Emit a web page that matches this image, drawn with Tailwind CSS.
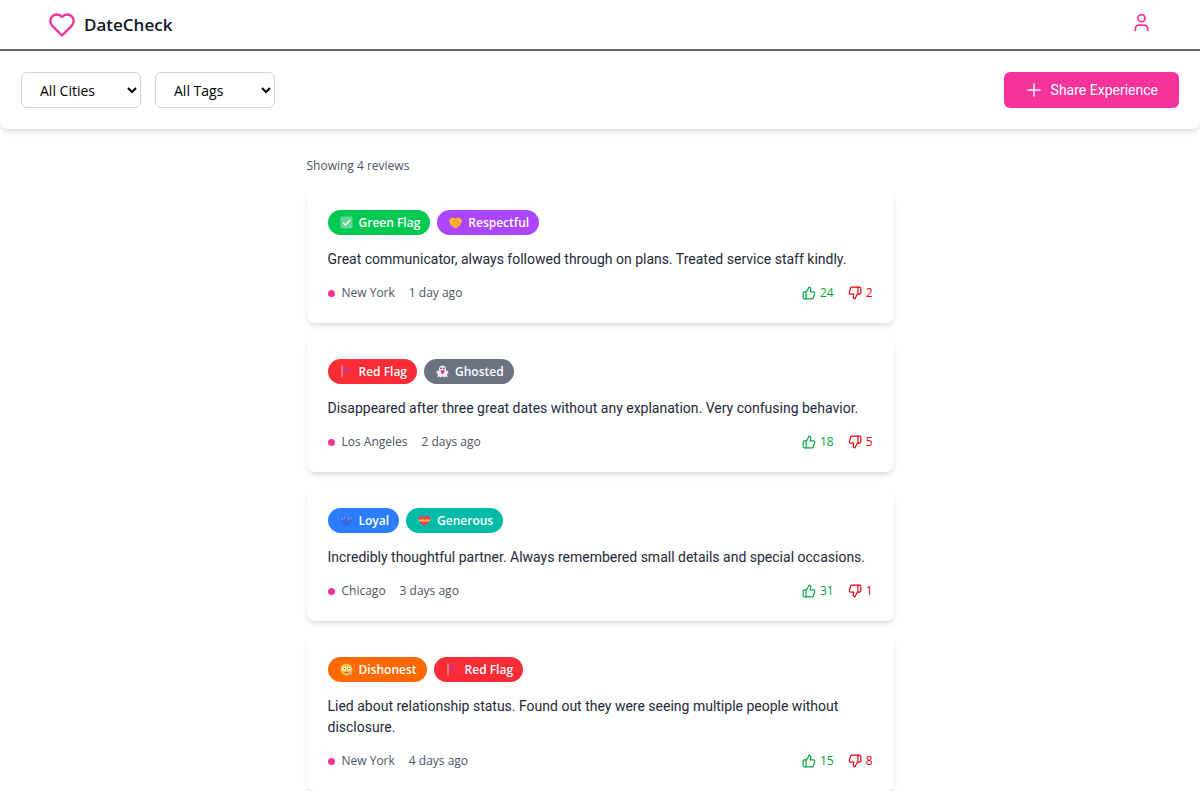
<!DOCTYPE html>
<html lang="en">

<head>
  <meta charset="UTF-8">
  <meta name="viewport" content="width=device-width, initial-scale=1.0">
  <title>DateCheck</title>
  <script src="https://cdn.jsdelivr.net/npm/@tailwindcss/browser@4"></script>
</head>

<body class="bg-white font-['Open_Sans',sans-serif] text-gray-900">
  <!-- shared icons -->
  <svg class="hidden">
    <symbol id="thumbs-up" viewBox="0 0 24 24" fill="none" stroke="currentColor" stroke-width="2" stroke-linecap="round" stroke-linejoin="round">
      <path d="M7 10v12" />
      <path d="M15 5.88 14 10h5.83a2 2 0 0 1 1.92 2.56l-2.33 8A2 2 0 0 1 17.5 22H4a2 2 0 0 1-2-2v-8a2 2 0 0 1 2-2h2.76a2 2 0 0 0 1.79-1.11L12 2a3.13 3.13 0 0 1 3 3.88Z" />
    </symbol>
    <symbol id="thumbs-down" viewBox="0 0 24 24" fill="none" stroke="currentColor" stroke-width="2" stroke-linecap="round" stroke-linejoin="round">
      <path d="M17 14V2" />
      <path d="M9 18.12 10 14H4.17a2 2 0 0 1-1.92-2.56l2.33-8A2 2 0 0 1 6.5 2H20a2 2 0 0 1 2 2v8a2 2 0 0 1-2 2h-2.76a2 2 0 0 0-1.79 1.11L12 22a3.13 3.13 0 0 1-3-3.88Z" />
    </symbol>
    <symbol id="check" viewBox="0 0 13 13">
      <rect x="0.5" y="0.5" width="12" height="12" rx="1" fill="#5fd891" />
      <path d="M3 6.8 5.4 9.2 10 4" fill="none" stroke="#fff" stroke-width="1.4" />
    </symbol>
    <symbol id="handshake" viewBox="0 0 13 13">
      <path d="M0.2 4.5 2.5 1.5 6.5 2.3 10.5 1.5 12.8 4.5 12 8.3 7.5 12 5.5 12 1 8.3Z" fill="#fbb72f" />
      <path d="M4 5.5 6.5 4 9 6 11 8M3.5 8 6 10.5M6 7.5 8.3 9.8" fill="none" stroke="#d9822b" stroke-width="0.8" />
    </symbol>
    <symbol id="flag" viewBox="0 0 13 13">
      <path d="M2.6 1 12.5 4.8 2.6 8.6Z" fill="#d63384" />
      <path d="M2 0.5v12" stroke="#e8a878" stroke-width="1.2" />
    </symbol>
    <symbol id="ghost" viewBox="0 0 13 13">
      <path d="M3 6V4a3.5 3.5 0 0 1 7 0v2l2-.5.3 3L11 9l.8 3.2-2-.7-1.500 1-1.800-1-1.800 1-1.500-1-2 .7L2 9 .5 8.500l.4-3Z" fill="#eceaf4" />
      <circle cx="5" cy="3.4" r="0.8" fill="#4b3b5c" />
      <circle cx="8" cy="3.4" r="0.8" fill="#4b3b5c" />
      <path d="M4.6 5.3h4L7.8 8.3 6.5 9 5.2 8Z" fill="#ef2e71" />
    </symbol>
    <symbol id="blue-heart" viewBox="0 0 13 13">
      <path d="M6.5 12C2.500 9.500.5 7.500.5 4.800.5 1.200 5 .8 6.500 3.400 8 .8 12.500 1.200 12.500 4.800c0 2.700-2 4.700-6 7.200Z" fill="#3a66e4" />
      <path d="M2.500 3v3M4.800 2.500v2.500M8.500 2.500v4M11 3v2.500" stroke="#6ba0f8" stroke-width="1.300" />
    </symbol>
    <symbol id="gift-heart" viewBox="0 0 13 13">
      <path d="M6.500 12C2.500 9.300.5 7.300.5 4.800.5 1.300 5 .8 6.500 3.500 8 .8 12.500 1.300 12.500 4.800c0 2.500-2 4.500-6 7.200Z" fill="#f23b5e" />
      <path d="M.6 5.200 6.500 6.300 12.400 5.200 11.800 7.200 6.500 8 1.200 7.200Z" fill="#fcc02e" />
      <path d="M3.800 4.500 6.500 5.500 9.200 4.500V6.500H3.800Z" fill="#f79a2c" />
    </symbol>
    <symbol id="worried" viewBox="0 0 13 13">
      <circle cx="6.500" cy="6.500" r="6" fill="#fcc13a" />
      <circle cx="4" cy="5.500" r="1.900" fill="#fff" />
      <circle cx="9" cy="5.500" r="1.900" fill="#fff" />
      <circle cx="4.200" cy="5.500" r="0.800" fill="#553c3c" />
      <circle cx="8.800" cy="5.500" r="0.800" fill="#553c3c" />
      <path d="M4.300 10Q6.500 8.400 8.700 10" fill="none" stroke="#7a4a2c" stroke-width="1" />
      <path d="M10.500 8.500 12.500 11.500 9 12Z" fill="#b9a7c9" />
    </symbol>
  </svg>

  <header class="flex items-center justify-between h-[51px] px-12 border-b-2 border-[#636363]">
    <a href="#" class="flex items-center gap-2">
      <svg class="size-7 text-[#f6339a]" viewBox="0 0 24 24" fill="none" stroke="currentColor" stroke-width="2" stroke-linecap="round" stroke-linejoin="round">
        <path d="M19 14c1.490-1.460 3-3.210 3-5.500A5.500 5.500 0 0 0 16.500 3c-1.760 0-3 .5-4.500 2-1.500-1.500-2.740-2-4.500-2A5.500 5.500 0 0 0 2 8.500c0 2.300 1.500 4.050 3 5.500l7 7Z" />
      </svg>
      <span class="text-[17px] leading-6 font-semibold">DateCheck</span>
    </a>
    <button type="button" aria-label="Profile" class="pb-1">
      <svg class="size-[21px] text-[#f6339a]" viewBox="0 0 24 24" fill="none" stroke="currentColor" stroke-width="2" stroke-linecap="round" stroke-linejoin="round">
        <path d="M19 21v-2a4 4 0 0 0-4-4H9a4 4 0 0 0-4 4v2" />
        <circle cx="12" cy="7" r="4" />
      </svg>
    </button>
  </header>

  <section class="flex items-center justify-between p-[21px] rounded-lg shadow-md">
    <div class="flex gap-[14px]">
      <select aria-label="City" class="w-[120px] h-9 px-[14px] border border-gray-300 rounded-md text-sm text-black">
        <option>All Cities</option>
        <option>New York</option>
        <option>Los Angeles</option>
        <option>Chicago</option>
      </select>
      <select aria-label="Tag" class="w-[120px] h-9 px-[14px] border border-gray-300 rounded-md text-sm text-black">
        <option>All Tags</option>
        <option>Green Flag</option>
        <option>Red Flag</option>
      </select>
    </div>
    <button type="button" class="flex items-center gap-2 h-9 px-[21px] rounded-md bg-[#f6339a] font-[Roboto,sans-serif] text-sm text-white">
      <svg class="size-[18px]" viewBox="0 0 24 24" fill="none" stroke="currentColor" stroke-width="2" stroke-linecap="round">
        <path d="M4 12h16M12 4v16" />
      </svg>
      Share Experience
    </button>
  </section>

  <main class="max-w-[587px] mx-auto pt-7">
    <p class="text-xs leading-[18px] text-gray-600 mb-[14px]">Showing 4 reviews</p>

    <div class="flex flex-col gap-[15px]">
      <article class="p-[21px] rounded-lg shadow-md">
        <div class="flex gap-[7px] mb-[14px]">
          <span class="flex items-center gap-[6px] h-[25px] pl-3 pr-[10px] rounded-full bg-green-500 text-xs font-semibold text-white">
            <svg class="size-[13px]"><use href="#check" /></svg>Green Flag
          </span>
          <span class="flex items-center gap-[6px] h-[25px] pl-3 pr-[10px] rounded-full bg-purple-500 text-xs font-semibold text-white">
            <svg class="size-[13px]"><use href="#handshake" /></svg>Respectful
          </span>
        </div>
        <p class="font-[Roboto,sans-serif] text-sm leading-[21px] text-gray-800 mb-[14px]">Great communicator, always followed through on plans. Treated service staff kindly.</p>
        <div class="flex justify-between text-xs leading-[18px] text-gray-600">
          <div class="flex items-center gap-[14px]">
            <span class="flex items-center gap-[7px]"><span class="size-[7px] rounded-full bg-[#f6339a]"></span>New York</span>
            <span>1 day ago</span>
          </div>
          <div class="flex gap-[14px]">
            <button type="button" class="flex items-center gap-1 text-green-600"><svg class="size-[14px]"><use href="#thumbs-up" /></svg>24</button>
            <button type="button" class="flex items-center gap-1 text-red-600"><svg class="size-[14px]"><use href="#thumbs-down" /></svg>2</button>
          </div>
        </div>
      </article>

      <article class="p-[21px] rounded-lg shadow-md">
        <div class="flex gap-[7px] mb-[14px]">
          <span class="flex items-center gap-[6px] h-[25px] pl-3 pr-[10px] rounded-full bg-red-500 text-xs font-semibold text-white">
            <svg class="size-[13px]"><use href="#flag" /></svg>Red Flag
          </span>
          <span class="flex items-center gap-[6px] h-[25px] pl-3 pr-[10px] rounded-full bg-gray-500 text-xs font-semibold text-white">
            <svg class="size-[13px]"><use href="#ghost" /></svg>Ghosted
          </span>
        </div>
        <p class="font-[Roboto,sans-serif] text-sm leading-[21px] text-gray-800 mb-[14px]">Disappeared after three great dates without any explanation. Very confusing behavior.</p>
        <div class="flex justify-between text-xs leading-[18px] text-gray-600">
          <div class="flex items-center gap-[14px]">
            <span class="flex items-center gap-[7px]"><span class="size-[7px] rounded-full bg-[#f6339a]"></span>Los Angeles</span>
            <span>2 days ago</span>
          </div>
          <div class="flex gap-[14px]">
            <button type="button" class="flex items-center gap-1 text-green-600"><svg class="size-[14px]"><use href="#thumbs-up" /></svg>18</button>
            <button type="button" class="flex items-center gap-1 text-red-600"><svg class="size-[14px]"><use href="#thumbs-down" /></svg>5</button>
          </div>
        </div>
      </article>

      <article class="p-[21px] rounded-lg shadow-md">
        <div class="flex gap-[7px] mb-[14px]">
          <span class="flex items-center gap-[6px] h-[25px] pl-3 pr-[10px] rounded-full bg-blue-500 text-xs font-semibold text-white">
            <svg class="size-[13px]"><use href="#blue-heart" /></svg>Loyal
          </span>
          <span class="flex items-center gap-[6px] h-[25px] pl-3 pr-[10px] rounded-full bg-teal-500 text-xs font-semibold text-white">
            <svg class="size-[13px]"><use href="#gift-heart" /></svg>Generous
          </span>
        </div>
        <p class="font-[Roboto,sans-serif] text-sm leading-[21px] text-gray-800 mb-[14px]">Incredibly thoughtful partner. Always remembered small details and special occasions.</p>
        <div class="flex justify-between text-xs leading-[18px] text-gray-600">
          <div class="flex items-center gap-[14px]">
            <span class="flex items-center gap-[7px]"><span class="size-[7px] rounded-full bg-[#f6339a]"></span>Chicago</span>
            <span>3 days ago</span>
          </div>
          <div class="flex gap-[14px]">
            <button type="button" class="flex items-center gap-1 text-green-600"><svg class="size-[14px]"><use href="#thumbs-up" /></svg>31</button>
            <button type="button" class="flex items-center gap-1 text-red-600"><svg class="size-[14px]"><use href="#thumbs-down" /></svg>1</button>
          </div>
        </div>
      </article>

      <article class="p-[21px] rounded-lg shadow-md">
        <div class="flex gap-[7px] mb-[14px]">
          <span class="flex items-center gap-[6px] h-[25px] pl-3 pr-[10px] rounded-full bg-orange-500 text-xs font-semibold text-white">
            <svg class="size-[13px]"><use href="#worried" /></svg>Dishonest
          </span>
          <span class="flex items-center gap-[6px] h-[25px] pl-3 pr-[10px] rounded-full bg-red-500 text-xs font-semibold text-white">
            <svg class="size-[13px]"><use href="#flag" /></svg>Red Flag
          </span>
        </div>
        <p class="font-[Roboto,sans-serif] text-sm leading-[21px] text-gray-800 mb-[14px]">Lied about relationship status. Found out they were seeing multiple people without disclosure.</p>
        <div class="flex justify-between text-xs leading-[18px] text-gray-600">
          <div class="flex items-center gap-[14px]">
            <span class="flex items-center gap-[7px]"><span class="size-[7px] rounded-full bg-[#f6339a]"></span>New York</span>
            <span>4 days ago</span>
          </div>
          <div class="flex gap-[14px]">
            <button type="button" class="flex items-center gap-1 text-green-600"><svg class="size-[14px]"><use href="#thumbs-up" /></svg>15</button>
            <button type="button" class="flex items-center gap-1 text-red-600"><svg class="size-[14px]"><use href="#thumbs-down" /></svg>8</button>
          </div>
        </div>
      </article>
    </div>
  </main>
</body>

</html>
